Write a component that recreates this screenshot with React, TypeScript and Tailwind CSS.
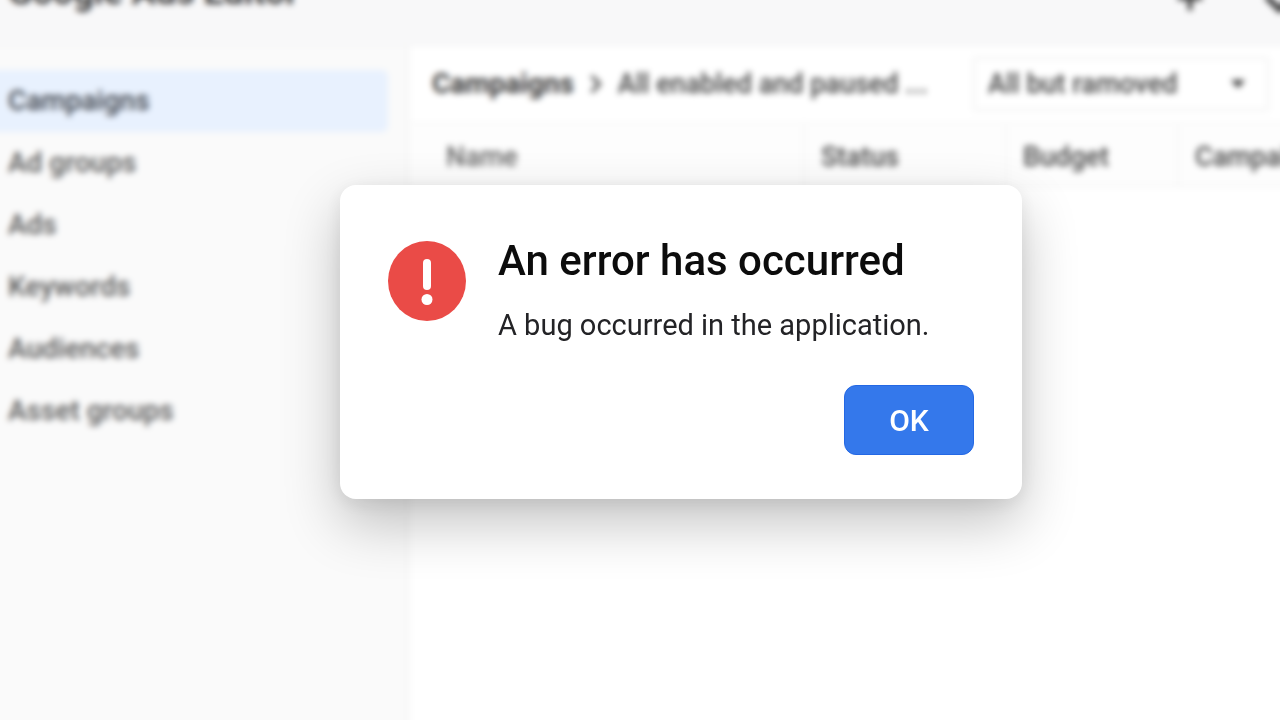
import { ChevronDown, ChevronRight, Plus } from "lucide-react";

const sections = ["Campaigns", "Ad groups", "Ads", "Keywords", "Audiences", "Asset groups"];

function Header() {
  return (
    <header className="flex h-[86px] shrink-0 items-start justify-between border-b-2 border-[#f5f5f6] bg-[#f8f8f9] pt-3 pl-6">
      <h1 className="text-[36px] leading-10 font-bold text-[#3c3c3c]">Google Ads Editor</h1>
      <div className="-mr-2 flex items-start gap-12 pt-2">
        <button type="button" aria-label="Add">
          <Plus className="size-9 text-[#333]" strokeWidth={3} />
        </button>
        <button type="button" aria-label="More">
          <ChevronDown className="size-12 text-[#333]" strokeWidth={3} />
        </button>
      </div>
    </header>
  );
}

function Sidebar() {
  return (
    <nav className="w-[426px] shrink-0 border-r-4 border-[#f7f7f7] bg-[#fafafa] pt-6 pr-[18px] text-[28px]">
      <ul>
        {sections.map((name, i) => (
          <li key={name}>
            <a
              href="#"
              className={
                i === 0
                  ? "flex h-[62px] items-center rounded-r-md bg-[#e8f1fe] pl-6 font-medium text-[#3c424a]"
                  : "flex h-[62px] items-center pl-6 font-medium text-[#5a5a5a]"
              }
            >
              {name}
            </a>
          </li>
        ))}
      </ul>
    </nav>
  );
}

function Toolbar() {
  return (
    <div className="flex h-[78px] items-center justify-between border-b-2 border-[#f8f8f8] pr-[26px] pl-[22px]">
      <div className="flex items-center gap-2 whitespace-nowrap">
        <a href="#" className="text-[28px] font-bold text-[#3a3a3a]">Campaigns</a>
        <ChevronRight className="size-7 text-[#555]" strokeWidth={3} />
        <span className="font-medium text-[#444]">All enabled and paused ...</span>
      </div>
      <div className="relative">
        <select
          aria-label="Status filter"
          className="h-14 w-[298px] appearance-none rounded-sm border-4 border-[#f7f7f7] bg-white pl-3 font-medium text-[#444]"
        >
          <option>All but ramoved</option>
        </select>
        <svg
          viewBox="0 0 16 9"
          className="pointer-events-none absolute top-6 right-6 h-2 w-4 fill-[#333]"
          aria-hidden="true"
        >
          <path d="M0 0h16L8 9z" />
        </svg>
      </div>
    </div>
  );
}

function CampaignTable() {
  return (
    <table className="w-full table-fixed border-collapse">
      <thead>
        <tr className="h-[62px] border-b-2 border-[#f4f4f4] bg-[#fdfdfd] text-left whitespace-nowrap text-[#484848]">
          <th className="w-[394px] border-r-2 border-[#f5f5f5] pt-1.5 pl-9 font-medium text-[#666]">Name</th>
          <th className="w-[202px] border-r-2 border-[#f5f5f5] pt-1.5 pl-4 font-medium">Status</th>
          <th className="w-[172px] border-r-2 border-[#f5f5f5] pt-1.5 pl-4 font-medium">Budget</th>
          <th className="pt-1.5 pl-4 font-medium">Campaign</th>
        </tr>
      </thead>
    </table>
  );
}

function ErrorDialog() {
  return (
    <div className="absolute inset-0 flex items-center justify-center pb-9 pl-[82px]">
      <div
        role="alertdialog"
        aria-modal="true"
        aria-labelledby="error-title"
        aria-describedby="error-text"
        className="w-[682px] rounded-2xl bg-white pt-12 pr-12 pb-11 pl-12 shadow-[0_24px_56px_rgba(0,0,0,0.24),0_4px_20px_rgba(0,0,0,0.08)]"
      >
        <div className="flex gap-8">
          <svg viewBox="0 0 78 80" className="mt-2 h-20 w-[78px] shrink-0" aria-hidden="true">
            <ellipse cx="39" cy="40" rx="39" ry="40" fill="#ea4b47" />
            <rect x="35" y="18" width="8" height="31" rx="4" fill="#fff" />
            <circle cx="39" cy="58.500" r="5.500" fill="#fff" />
          </svg>
          <div>
            <h2 id="error-title" className="text-[42px] leading-14 font-medium text-[#0c0c0c]">
              An error has occurred
            </h2>
            <p id="error-text" className="mt-4 text-[29px] leading-10 text-[#232326]">
              A bug occurred in the application.
            </p>
          </div>
        </div>
        <div className="mt-10 flex justify-end">
          <button
            type="button"
            className="h-[70px] w-[130px] rounded-xl border border-[#2468e4] bg-[#3478eb] text-[30px] font-medium text-white"
          >
            OK
          </button>
        </div>
      </div>
    </div>
  );
}

export default function App() {
  return (
    <div className="relative h-screen overflow-hidden bg-white font-['Roboto',sans-serif]">
      <div className="-mx-4 -mt-10 flex h-[calc(100%+56px)] flex-col text-[27px] blur-[3px]">
        <Header />
        <div className="flex grow">
          <Sidebar />
          <main className="min-w-0 grow bg-white">
            <Toolbar />
            <CampaignTable />
          </main>
        </div>
      </div>
      <ErrorDialog />
    </div>
  );
}
